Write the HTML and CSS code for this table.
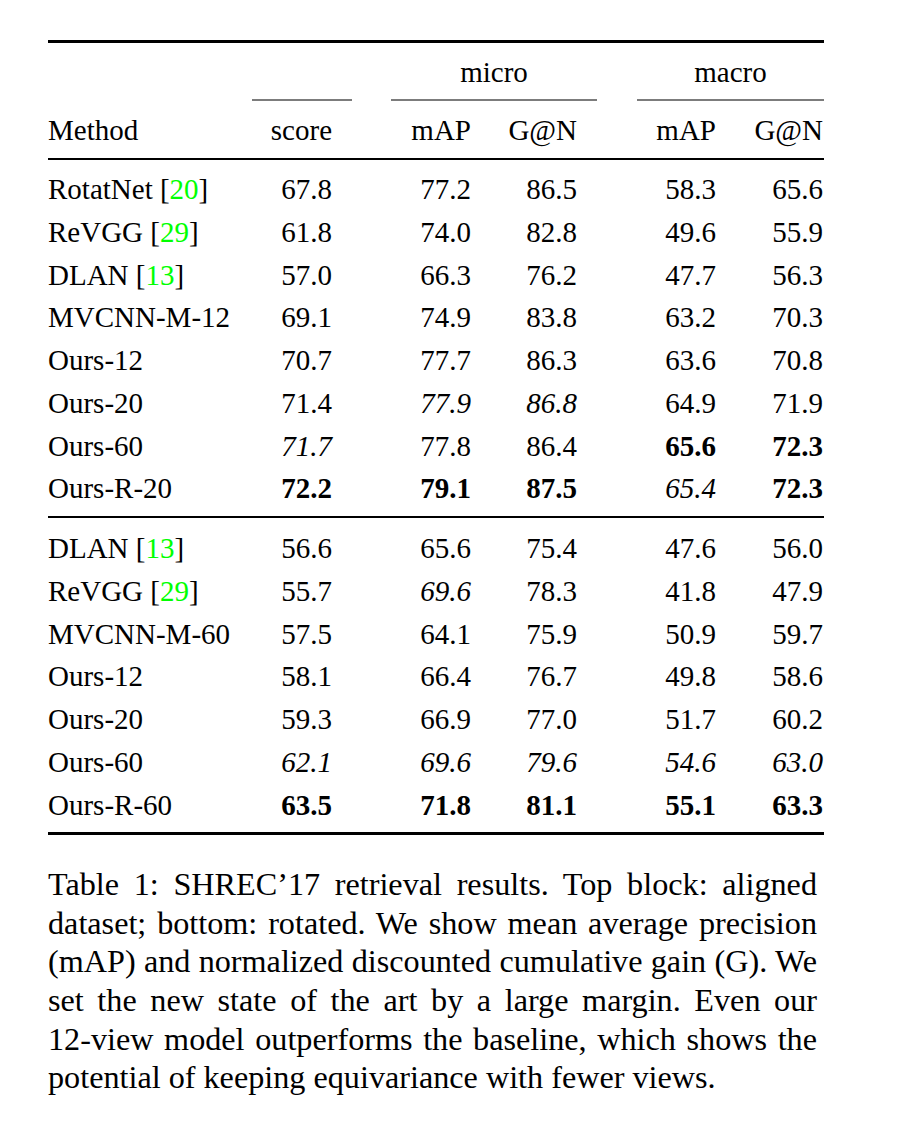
FILE: index.html
```html
<!DOCTYPE html>
<html lang="en">
<head>
<meta charset="utf-8">
<title>Table 1: SHREC'17 retrieval results</title>
<link rel="stylesheet" href="styles.css">
</head>
<body>
<div class="page">
  <div class="tbl">
    <div class="rule heavy"></div>

    <div class="grid head1">
      <div class="grp micro">micro</div>
      <div class="grp macro">macro</div>
    </div>
    <div class="grid cmids">
      <div class="cmid sc"></div>
      <div class="cmid micro"></div>
      <div class="cmid macro"></div>
    </div>
    <div class="grid head2">
      <div class="c1">Method</div>
      <div class="c2">score</div>
      <div class="c3">mAP</div>
      <div class="c4">G@N</div>
      <div class="c5">mAP</div>
      <div class="c6">G@N</div>
    </div>

    <div class="rule light"></div>

    <div class="block top">
      <div class="grid row">
        <div class="c1">RotatNet [<span class="cite">20</span>]</div>
        <div class="c2">67.8</div><div class="c3">77.2</div><div class="c4">86.5</div><div class="c5">58.3</div><div class="c6">65.6</div>
      </div>
      <div class="grid row">
        <div class="c1">ReVGG [<span class="cite">29</span>]</div>
        <div class="c2">61.8</div><div class="c3">74.0</div><div class="c4">82.8</div><div class="c5">49.6</div><div class="c6">55.9</div>
      </div>
      <div class="grid row">
        <div class="c1">DLAN [<span class="cite">13</span>]</div>
        <div class="c2">57.0</div><div class="c3">66.3</div><div class="c4">76.2</div><div class="c5">47.7</div><div class="c6">56.3</div>
      </div>
      <div class="grid row">
        <div class="c1">MVCNN-M-12</div>
        <div class="c2">69.1</div><div class="c3">74.9</div><div class="c4">83.8</div><div class="c5">63.2</div><div class="c6">70.3</div>
      </div>
      <div class="grid row">
        <div class="c1">Ours-12</div>
        <div class="c2">70.7</div><div class="c3">77.7</div><div class="c4">86.3</div><div class="c5">63.6</div><div class="c6">70.8</div>
      </div>
      <div class="grid row">
        <div class="c1">Ours-20</div>
        <div class="c2">71.4</div><div class="c3 it">77.9</div><div class="c4 it">86.8</div><div class="c5">64.9</div><div class="c6">71.9</div>
      </div>
      <div class="grid row">
        <div class="c1">Ours-60</div>
        <div class="c2 it">71.7</div><div class="c3">77.8</div><div class="c4">86.4</div><div class="c5 bf">65.6</div><div class="c6 bf">72.3</div>
      </div>
      <div class="grid row">
        <div class="c1">Ours-R-20</div>
        <div class="c2 bf">72.2</div><div class="c3 bf">79.1</div><div class="c4 bf">87.5</div><div class="c5 it">65.4</div><div class="c6 bf">72.3</div>
      </div>
    </div>

    <div class="rule light"></div>

    <div class="block bottom">
      <div class="grid row">
        <div class="c1">DLAN [<span class="cite">13</span>]</div>
        <div class="c2">56.6</div><div class="c3">65.6</div><div class="c4">75.4</div><div class="c5">47.6</div><div class="c6">56.0</div>
      </div>
      <div class="grid row">
        <div class="c1">ReVGG [<span class="cite">29</span>]</div>
        <div class="c2">55.7</div><div class="c3 it">69.6</div><div class="c4">78.3</div><div class="c5">41.8</div><div class="c6">47.9</div>
      </div>
      <div class="grid row">
        <div class="c1">MVCNN-M-60</div>
        <div class="c2">57.5</div><div class="c3">64.1</div><div class="c4">75.9</div><div class="c5">50.9</div><div class="c6">59.7</div>
      </div>
      <div class="grid row">
        <div class="c1">Ours-12</div>
        <div class="c2">58.1</div><div class="c3">66.4</div><div class="c4">76.7</div><div class="c5">49.8</div><div class="c6">58.6</div>
      </div>
      <div class="grid row">
        <div class="c1">Ours-20</div>
        <div class="c2">59.3</div><div class="c3">66.9</div><div class="c4">77.0</div><div class="c5">51.7</div><div class="c6">60.2</div>
      </div>
      <div class="grid row">
        <div class="c1">Ours-60</div>
        <div class="c2 it">62.1</div><div class="c3 it">69.6</div><div class="c4 it">79.6</div><div class="c5 it">54.6</div><div class="c6 it">63.0</div>
      </div>
      <div class="grid row">
        <div class="c1">Ours-R-60</div>
        <div class="c2 bf">63.5</div><div class="c3 bf">71.8</div><div class="c4 bf">81.1</div><div class="c5 bf">55.1</div><div class="c6 bf">63.3</div>
      </div>
    </div>

    <div class="rule heavy"></div>
  </div>

  <div class="caption">
    <span class="line">Table 1: SHREC’17 retrieval results. Top block: aligned</span>
    <span class="line">dataset; bottom: rotated. We show mean average precision</span>
    <span class="line">(mAP) and normalized discounted cumulative gain (G). We</span>
    <span class="line">set the new state of the art by a large margin. Even our</span>
    <span class="line">12-view model outperforms the baseline, which shows the</span>
    <span class="line last">potential of keeping equivariance with fewer views.</span>
  </div>
</div>
</body>
</html>
```

FILE: styles.css
```css
html, body {
  margin: 0;
  padding: 0;
  background: #ffffff;
}

body {
  font-family: "Liberation Serif", "Times New Roman", serif;
  color: #000000;
}

.page {
  width: 904px;
  padding: 40px 0 0 48px;
  box-sizing: border-box;
}

.tbl {
  width: 776px;
  font-size: 29px;
}

.rule {
  background: #000000;
}

.rule.heavy {
  height: 3px;
}

.rule.light {
  height: 2px;
}

.grid {
  display: grid;
  grid-template-columns: 204px 100px 142px 103px 139px 88px;
}

.head1 {
  line-height: 32px;
  padding: 13px 0 11px;
}

.head1 .grp {
  text-align: center;
}

.micro {
  grid-column: 3 / 5;
  margin-left: 39px;
}

.macro {
  grid-column: 5 / 7;
  margin-left: 40px;
}

.cmids {
  height: 2px;
}

.cmid {
  background: #7c7c7c;
  height: 2px;
}

.cmid.sc {
  grid-column: 2 / 3;
}

.head2 {
  line-height: 32px;
  padding: 13px 0 12px;
}

.block.top {
  padding: 8px 0 6px;
}

.block.bottom {
  padding: 9px 0 6px;
}

.row {
  line-height: 42.75px;
  height: 42.75px;
}

.c1 {
  text-align: left;
  white-space: nowrap;
}

.c2, .c3, .c4, .c5, .c6 {
  text-align: right;
  white-space: nowrap;
}

.c2 { padding-right: 20px; }
.c3 { padding-right: 23px; }
.c4 { padding-right: 20px; }
.c5 { padding-right: 20px; }
.c6 { padding-right: 1px; }

.it {
  font-style: italic;
}

.bf {
  font-weight: bold;
}

.cite {
  color: #00ff00;
}

.caption {
  width: 769px;
  margin-top: 30px;
  font-size: 32.2px;
  line-height: 38.6px;
}

.caption .line {
  display: block;
  text-align: justify;
  text-align-last: justify;
  white-space: nowrap;
}

.caption .line.last {
  text-align: left;
  text-align-last: left;
}
```
